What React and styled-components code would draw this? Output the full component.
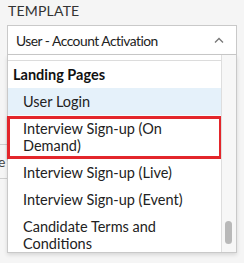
import React from "react";
import styled, { createGlobalStyle } from "styled-components";

const GlobalStyle = createGlobalStyle`
  body {
    margin: 0;
    background: #f5f5f5;
    font-family: Lato, "Open Sans", sans-serif;
    color: #222;
  }
`;

const items = [
  { label: "User Login", active: true },
  { label: "Interview Sign-up (On Demand)", marked: true },
  { label: "Interview Sign-up (Live)" },
  { label: "Interview Sign-up (Event)" },
  { label: "Candidate Terms and Conditions" },
];

export default function App() {
  return (
    <>
      <GlobalStyle />
      <Page>
        <Label>TEMPLATE</Label>
        <Select>
          <span>User - Account Activation</span>
          <svg width="10" height="6" viewBox="0 0 10 6">
            <path d="M1 5.5 L5 1.5 L9 5.5" fill="none" stroke="#777" strokeWidth="1.3" />
          </svg>
        </Select>
        <BehindField>
          <span>Type</span>
        </BehindField>
        <Dropdown>
          <List>
            <Spacer />
            <GroupHeader>Landing Pages</GroupHeader>
            {items.map((it) => (
              <Option key={it.label} $active={it.active}>
                {it.label}
                {it.marked && <Marker />}
              </Option>
            ))}
          </List>
          <Track>
            <Thumb />
          </Track>
        </Dropdown>
      </Page>
    </>
  );
}

const Page = styled.div`
  position: relative;
  width: 244px;
  height: 263px;
  overflow: hidden;
`;

const Label = styled.div`
  font-size: 14px;
  line-height: 17px;
  color: #333;
  padding: 2px 0 0 8px;
  letter-spacing: 0.2px;
`;

const Select = styled.div`
  box-sizing: border-box;
  margin: 6px 0 0 7px;
  width: 230px;
  height: 30px;
  border: 1px solid #c9c9c9;
  background: #fff;
  display: flex;
  align-items: center;
  justify-content: space-between;
  padding: 0 12px 0 8px;
  font-size: 13.8px;
  letter-spacing: -0.5px;
  color: #222;
`;

const BehindField = styled.div`
  box-sizing: border-box;
  margin: 89px 0 0 -40px;
  width: 200px;
  height: 35px;
  border-top: 1px solid #cfcfcf;
  border-bottom: 1px solid #cfcfcf;
  display: flex;
  align-items: center;
  font-size: 14px;
  color: #444;
  span {
    margin-left: 16px;
  }
`;

const Dropdown = styled.div`
  position: absolute;
  top: 55px;
  left: 7px;
  box-sizing: border-box;
  width: 230px;
  height: 198px;
  border: 1px solid #c9c9c9;
  border-top: 0;
  background: #fff;
  box-shadow: 0 2px 4px rgba(0, 0, 0, 0.12);
  display: flex;
`;

const List = styled.div`
  flex: 1;
  overflow-x: visible;
  overflow-y: clip;
  font-size: 14.5px;
`;

const Spacer = styled.div`
  height: 5px;
`;

const GroupHeader = styled.div`
  border-top: 1px solid #dcdcdc;
  height: 27px;
  line-height: 27px;
  padding-left: 5px;
  font-weight: 700;
  color: #111;
`;

const Option = styled.div`
  position: relative;
  padding: 5px 8px 5px 15px;
  line-height: 17px;
  background: ${(p) => (p.$active ? "#e5f1fa" : "#fff")};
  color: #222;
`;

const Marker = styled.div`
  position: absolute;
  top: 1px;
  bottom: 0;
  left: -1px;
  right: -1px;
  border: 3px solid #e3262b;
  box-shadow: 0 1px 2px rgba(0, 0, 0, 0.25);
`;

const Track = styled.div`
  position: relative;
  width: 14px;
  border-left: 1px solid #dedede;
  background: #f7f7f7;
`;

const Thumb = styled.div`
  position: absolute;
  top: 166px;
  left: 3px;
  width: 7px;
  height: 23px;
  border-radius: 4px;
  background: #b9b9b9;
`;
